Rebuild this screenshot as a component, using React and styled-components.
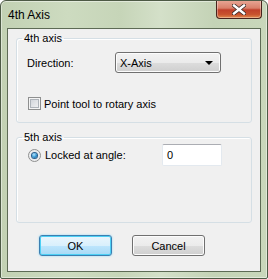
import styled, { createGlobalStyle } from "styled-components";

const GlobalStyle = createGlobalStyle`
  html, body {
    margin: 0;
    padding: 0;
    background: #ffffff;
  }
  body {
    font-family: "Liberation Sans", Arial, sans-serif;
  }
`;

const Window = styled.div`
  width: 268px;
  height: 279px;
  box-sizing: border-box;
  display: flex;
  flex-direction: column;
  border: 1px solid #4d5a45;
  border-radius: 6px 6px 2px 2px;
  background: linear-gradient(90deg, #c2d1b3 0%, #cddbc0 25%, #c6d5b8 45%, #d4e0c9 60%, #c4d3b6 80%, #c9d7bb 100%);
  box-shadow: inset 0 0 0 1px rgba(255, 255, 255, 0.45);
  overflow: hidden;
`;

const TitleBar = styled.div`
  height: 27px;
  display: flex;
  align-items: flex-start;
  justify-content: space-between;
  padding-left: 7px;
  flex-shrink: 0;
`;

const Caption = styled.div`
  font-size: 12px;
  color: #000;
  margin-top: 7px;
  line-height: 14px;
`;

const CloseButton = styled.div`
  width: 46px;
  height: 19px;
  margin-top: -1px;
  margin-right: 5px;
  box-sizing: border-box;
  border: 1px solid #47231c;
  border-top: none;
  border-radius: 0 0 4px 4px;
  background: linear-gradient(180deg, #e9a998 0%, #d9806a 45%, #c0402a 55%, #c8522e 80%, #e08a4c 100%);
  box-shadow: inset 0 0 0 1px rgba(255, 255, 255, 0.35);
  display: flex;
  align-items: center;
  justify-content: center;
`;

const Client = styled.div`
  margin: 0 6px 6px 6px;
  flex: 1;
  box-sizing: border-box;
  background: #f0f0f0;
  border: 1px solid #5d6b55;
  padding: 3px 8px 0 8px;
  display: flex;
  flex-direction: column;
  font-size: 11px;
  color: #000;
`;

const Group = styled.fieldset`
  margin: ${(p) => p.$top}px 0 0 0;
  padding: ${(p) => p.$pad};
  border: 1px solid #d5dfe5;
  border-radius: 3px;
  box-shadow: inset 1px 1px 0 #ffffff;
  min-width: 0;
  display: flex;
  flex-direction: column;
  height: ${(p) => p.$h}px;
  box-sizing: border-box;
`;

const Legend = styled.legend`
  padding: 0 2px;
  margin-left: 5px;
  font-size: 11px;
  line-height: 13px;
`;

const Row = styled.div`
  display: flex;
  align-items: center;
  padding-left: ${(p) => p.$indent || 0}px;
  margin-top: ${(p) => p.$top || 0}px;
`;

const Label = styled.span`
  width: ${(p) => (p.$w ? `${p.$w}px` : "auto")};
  flex-shrink: 0;
`;

const Combo = styled.div`
  width: 106px;
  height: 21px;
  box-sizing: border-box;
  border: 1px solid #707070;
  border-radius: 3px;
  background: linear-gradient(180deg, #f2f2f2 0%, #ebebeb 50%, #dddddd 50%, #cfcfcf 100%);
  box-shadow: inset 0 0 0 1px #fcfcfc;
  display: flex;
  align-items: center;
  justify-content: space-between;
  padding: 0 7px 0 4px;
`;

const Arrow = styled.span`
  width: 0;
  height: 0;
  border-left: 4px solid transparent;
  border-right: 4px solid transparent;
  border-top: 4px solid #000;
`;

const CheckBox = styled.span`
  width: 13px;
  height: 13px;
  box-sizing: border-box;
  border: 1px solid #8e8f8f;
  background: linear-gradient(135deg, #cbcfd5 0%, #f6f6f6 100%);
  box-shadow: inset 0 0 0 1px #f4f4f4, inset 0 0 0 2px #aeb3b9;
  margin-right: 3px;
  flex-shrink: 0;
`;

const Radio = styled.span`
  width: 13px;
  height: 13px;
  box-sizing: border-box;
  border-radius: 50%;
  border: 1px solid #8e8f8f;
  background: radial-gradient(circle at 50% 50%, #d6d9dd 0%, #f8f8f8 100%);
  display: flex;
  align-items: center;
  justify-content: center;
  margin-right: 4px;
  flex-shrink: 0;

  &::after {
    content: "";
    width: 5px;
    height: 5px;
    border-radius: 50%;
    background: radial-gradient(circle at 40% 35%, #b8e6ff 0%, #2d93d0 55%, #0e4f86 100%);
    box-shadow: 0 0 0 1px #2a5f8e;
  }
`;

const TextInput = styled.div`
  width: 60px;
  height: 22px;
  box-sizing: border-box;
  margin-left: auto;
  margin-right: 29px;
  background: #fff;
  border: 1px solid #e3e9ef;
  border-top-color: #abadb3;
  border-radius: 2px;
  padding: 0 4px;
  display: flex;
  align-items: center;
  font-size: 11px;
`;

const ButtonRow = styled.div`
  display: flex;
  gap: 20px;
  padding-left: 23px;
  margin-top: 12px;
`;

const Button = styled.div`
  width: 73px;
  height: 21px;
  box-sizing: border-box;
  border-radius: 3px;
  display: flex;
  align-items: center;
  justify-content: center;
  font-size: 11px;
  border: 1px solid ${(p) => (p.$primary ? "#3c7fb1" : "#707070")};
  background: ${(p) =>
    p.$primary
      ? "linear-gradient(180deg, #eaf6fd 0%, #d9f0fc 50%, #bee6fd 50%, #a7d9f5 100%)"
      : "linear-gradient(180deg, #f2f2f2 0%, #ebebeb 50%, #dddddd 50%, #cfcfcf 100%)"};
  box-shadow: ${(p) => (p.$primary ? "inset 0 0 0 1px #4cd0f5, 0 0 2px #7fd4f5" : "inset 0 0 0 1px #fcfcfc")};
`;

export default function App() {
  return (
    <>
      <GlobalStyle />
      <Window>
        <TitleBar>
          <Caption>4th Axis</Caption>
          <CloseButton>
            <svg width="14" height="11" viewBox="0 0 14 11">
              <path d="M2 1.5 L12 9.5 M12 1.5 L2 9.5" stroke="#3a2a25" strokeWidth="4" strokeLinecap="square" />
              <path d="M2 1.5 L12 9.5 M12 1.5 L2 9.5" stroke="#ffffff" strokeWidth="2.4" strokeLinecap="square" />
            </svg>
          </CloseButton>
        </TitleBar>
        <Client>
          <Group $top={0} $pad="7px 0 0 0" $h={91}>
            <Legend>4th axis</Legend>
            <Row $indent={10}>
              <Label $w={88}>Direction:</Label>
              <Combo>
                <span>X-Axis</span>
                <Arrow />
              </Combo>
            </Row>
            <Row $indent={11} $top={24}>
              <CheckBox />
              <Label>Point tool to rotary axis</Label>
            </Row>
          </Group>
          <Group $top={8} $pad="0" $h={92}>
            <Legend>5th axis</Legend>
            <Row $indent={11}>
              <Radio />
              <Label>Locked at angle:</Label>
              <TextInput>0</TextInput>
            </Row>
          </Group>
          <ButtonRow>
            <Button $primary>OK</Button>
            <Button>Cancel</Button>
          </ButtonRow>
        </Client>
      </Window>
    </>
  );
}
